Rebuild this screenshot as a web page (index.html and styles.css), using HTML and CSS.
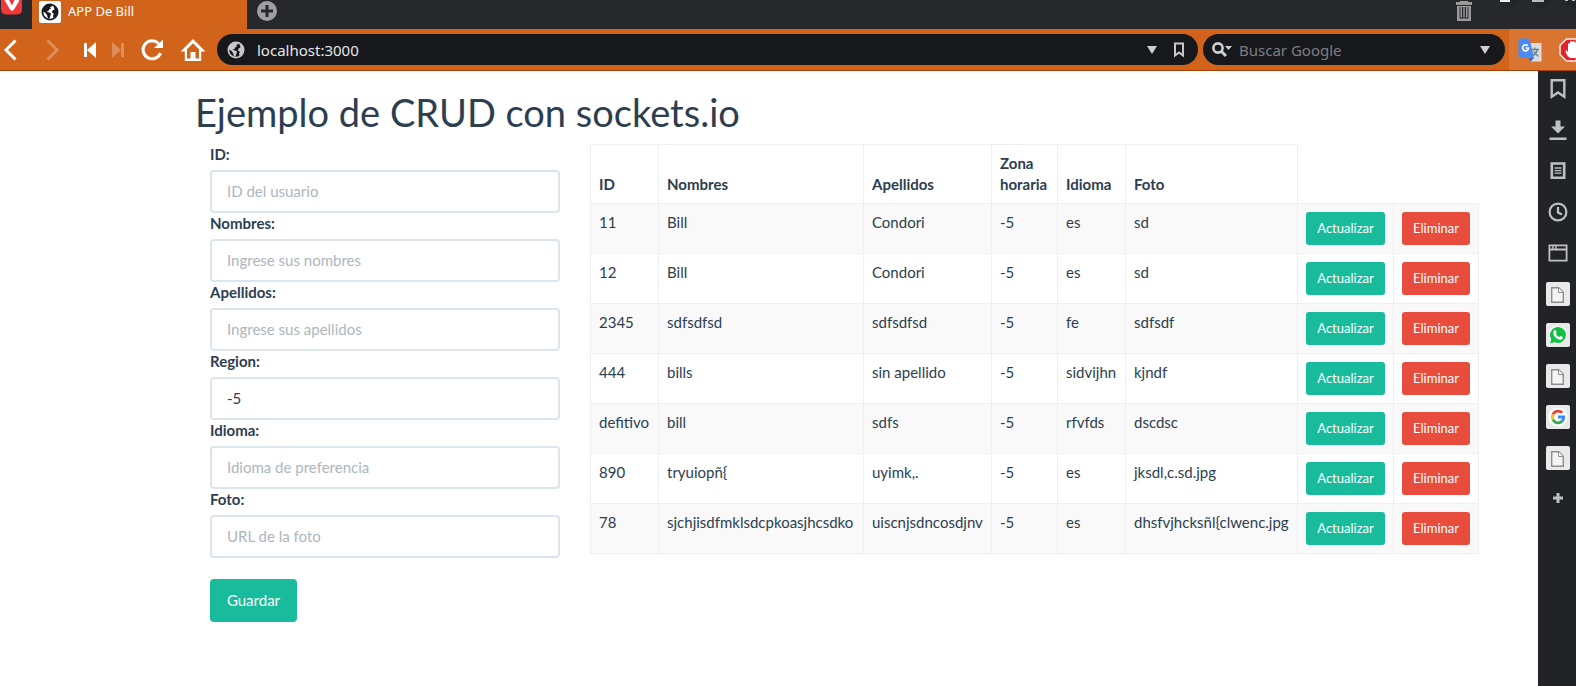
FILE: index.html
```html
<!DOCTYPE html>
<html lang="es">
<head>
<meta charset="utf-8">
<title>APP De Bill</title>
<link rel="stylesheet" href="styles.css">
</head>
<body>
<svg class="defs" width="0" height="0" aria-hidden="true">
  <symbol id="globe" viewBox="0 0 18 18">
    <circle cx="9" cy="9" r="7.6" fill="none" stroke="currentColor" stroke-width="1.8"/>
    <path fill="currentColor" d="M2 7 3.500 3.500 7 1.500 10.500 2 11 3.500 9 4 10 5.500 8 6.500 7.500 8 5.500 8.500 8 9.500 10 10.500 9.500 12.500 8.500 15.500 7 15.500 6 12 4.500 10 2 8.500ZM12.500 3 15.500 5.500 16.500 9 15 13 12.500 15 12 12.500 13 11 11 9.500 11.500 7.500 13.500 6.500Z"/>
  </symbol>
  <symbol id="page" viewBox="0 0 24 24">
    <path fill="#f4f4f4" stroke="#8e8e8e" stroke-width="1.4" d="M5.700 5.700h7l4.600 4.600v10H5.700z"/>
    <path fill="#fff" stroke="#8e8e8e" d="M12.500 6v4.500H17"/>
  </symbol>
</svg>

<header class="browser">
  <div class="tabs">
    <svg class="vivaldi" width="22" height="29" viewBox="0 0 22 29"><path fill="#ef3939" d="M1 0h21v10q0 4-5 4.500H6Q1 14 1 9z"/><path fill="#fff" d="M4.500 0h4.500l3 5.500L14.500 0H19q0 2-1 3l-4 6.500q-2 2.500-4 0z"/></svg>
    <div class="tab">
      <span class="favicon"><svg width="18" height="18"><use href="#globe"/></svg></span>
      <span>APP De Bill</span>
    </div>
    <button class="icon new-tab" aria-label="Nueva pestaña"><svg width="20" height="20" viewBox="0 0 20 20"><circle cx="10" cy="10" r="10" fill="#a0a0a1"/><path stroke="#27282c" stroke-width="3" d="M10 4v12M4 10h12"/></svg></button>
    <button class="icon trash" aria-label="Pestañas cerradas"><svg width="16" height="20" viewBox="0 0 16 20"><path fill="#9b9b9c" d="M0 1h4V0h8v1h4v3H0zM1 5h14v15H1z"/><path fill="#27282c" d="M3.500 6h9v11.500h-9z"/><path stroke="#9b9b9c" stroke-width="1.500" d="M5.200 6v10.500M8 6v10.500M10.800 6v10.500"/></svg></button>
    <svg class="window-controls" width="76" height="10" viewBox="0 0 76 10"><path fill="#242528" d="M-1 0h20q-3 8-10 8T-1 0zM31 0h20q-3 8-10 8T31 0zM64 0h20q-3 8-10 8T64 0z"/><path fill="#eee" d="M0 0h10v2H0z"/><path fill="#bbb" d="M32 0h12v2H32zM65 0h3v1h-3zM72 0h3v1h-3z"/></svg>
  </div>

  <div class="toolbar">
    <nav class="nav" aria-label="Navegador">
      <button class="icon" aria-label="Atrás"><svg width="14" height="22" viewBox="0 0 14 22"><path fill="none" stroke="#fff" stroke-width="3" d="M12.500 1.500 3 11l9.500 9.500"/></svg></button>
      <button class="icon dim" aria-label="Adelante"><svg width="14" height="22" viewBox="0 0 14 22"><path fill="none" stroke="#fff" stroke-width="3" d="M1.500 1.500 11 11l-9.500 9.500"/></svg></button>
      <button class="icon" aria-label="Rebobinar"><svg width="12" height="16" viewBox="0 0 12 16"><path fill="#fff" d="M0 1h3v14H0zM12 0v16L3 8z"/></svg></button>
      <button class="icon dim" aria-label="Avance rápido"><svg width="12" height="16" viewBox="0 0 12 16"><path fill="#fff" d="M9 1h3v14H9zM0 0v16l9-8z"/></svg></button>
      <button class="icon" aria-label="Recargar"><svg width="24" height="24" viewBox="0 0 24 24"><path fill="none" stroke="#fff" stroke-width="3" d="M18.500 5.500A9 9 0 1 0 20.500 15"/><path fill="#fff" d="M23 1.500V10h-9z"/></svg></button>
      <button class="icon" aria-label="Inicio"><svg width="26" height="22" viewBox="0 0 26 22"><path fill="#fff" fill-rule="evenodd" d="M13 0l12.500 12.500h-4.300V22H4.800v-9.500H.5zM13 4.200l-6 6.100v9.200h3.500V13h5v6.500H19v-9.200z"/></svg></button>
    </nav>
    <div class="pill address">
      <svg class="light" width="18" height="18"><use href="#globe"/></svg>
      <input type="text" aria-label="Dirección" value="localhost:3000">
      <button class="icon" aria-label="Historial"><svg width="10" height="8" viewBox="0 0 10 8"><path fill="#d0d0d0" d="M0 0h10L5 8z"/></svg></button>
      <button class="icon" aria-label="Marcador"><svg width="10" height="16" viewBox="0 0 10 16"><path fill="none" stroke="#c8c8c8" stroke-width="2" d="M1 1.500h8v12L5 10.500l-4 3z"/></svg></button>
    </div>
    <div class="pill search">
      <svg width="20" height="16" viewBox="0 0 20 16"><circle cx="6" cy="6" r="4.600" fill="none" stroke="#d0d0d0" stroke-width="2.600"/><path stroke="#d0d0d0" stroke-width="3" d="m9 9 5 5"/><path fill="#d0d0d0" d="M13 4h7l-3.500 4z"/></svg>
      <input type="text" aria-label="Buscar" placeholder="Buscar Google">
      <button class="icon" aria-label="Buscadores"><svg width="10" height="8" viewBox="0 0 10 8"><path fill="#d0d0d0" d="M0 0h10L5 8z"/></svg></button>
    </div>
    <div class="extensions">
      <svg width="24" height="24" viewBox="0 0 24 24"><path fill="#dcdcdc" d="M9 5h14.500v18.500H12z"/><path fill="#3762c8" d="M11 20h5l-4 4z"/><path fill="#4a8af4" d="M1.500.5h10L16 20H1.500Q.5 20 .5 19V1.500q0-1 1-1z"/><path fill="none" stroke="#fff" stroke-width="1.600" d="M9.800 7.800a3 3 0 1 0 .8 2.200H7.500"/><path fill="none" stroke="#67838c" stroke-width="1.300" d="M13.500 11.500H21M17 9.500v2M19.500 11.500q-1 4-5 6.500M15.500 13.500l5 5"/></svg>
      <svg width="17" height="24" viewBox="0 0 17 24"><path fill="#e3242b" stroke="#eee" stroke-width="1.500" d="M7.500 1h10v22h-10L1 16.500v-9z"/><path fill="#fff" d="M7 12l2 2V6q1-2 2 0V4q1.200-2 2.400 0 1-2 2.200 0l1.400 1v15h-6q-3-2-4.500-6z"/></svg>
    </div>
  </div>
</header>

<div class="view">
  <main class="page">
    <div class="container">
      <h1>Ejemplo de CRUD con sockets.io</h1>
      <div class="row">
        <form class="form">
          <label for="id">ID:</label>
          <input class="field" id="id" type="text" placeholder="ID del usuario">
          <label for="nombres">Nombres:</label>
          <input class="field" id="nombres" type="text" placeholder="Ingrese sus nombres">
          <label for="apellidos">Apellidos:</label>
          <input class="field" id="apellidos" type="text" placeholder="Ingrese sus apellidos">
          <label for="region">Region:</label>
          <input class="field" id="region" type="text" value="-5">
          <label for="idioma">Idioma:</label>
          <input class="field" id="idioma" type="text" placeholder="Idioma de preferencia">
          <label for="foto">Foto:</label>
          <input class="field" id="foto" type="text" placeholder="URL de la foto">
          <button class="btn save" type="button">Guardar</button>
        </form>
        <div class="list">
          <table class="users">
            <thead>
              <tr><th class="c-id">ID</th><th class="c-name">Nombres</th><th class="c-last">Apellidos</th><th class="c-zone">Zona horaria</th><th class="c-lang">Idioma</th><th class="c-photo">Foto</th></tr>
            </thead>
            <tbody>
              <tr><td>11</td><td>Bill</td><td>Condori</td><td>-5</td><td>es</td><td>sd</td><td><button class="btn small update">Actualizar</button></td><td><button class="btn small danger">Eliminar</button></td></tr>
              <tr><td>12</td><td>Bill</td><td>Condori</td><td>-5</td><td>es</td><td>sd</td><td><button class="btn small update">Actualizar</button></td><td><button class="btn small danger">Eliminar</button></td></tr>
              <tr><td>2345</td><td>sdfsdfsd</td><td>sdfsdfsd</td><td>-5</td><td>fe</td><td>sdfsdf</td><td><button class="btn small update">Actualizar</button></td><td><button class="btn small danger">Eliminar</button></td></tr>
              <tr><td>444</td><td>bills</td><td>sin apellido</td><td>-5</td><td>sidvijhn</td><td>kjndf</td><td><button class="btn small update">Actualizar</button></td><td><button class="btn small danger">Eliminar</button></td></tr>
              <tr><td>defitivo</td><td>bill</td><td>sdfs</td><td>-5</td><td>rfvfds</td><td>dscdsc</td><td><button class="btn small update">Actualizar</button></td><td><button class="btn small danger">Eliminar</button></td></tr>
              <tr><td>890</td><td>tryuiopñ{</td><td>uyimk,.</td><td>-5</td><td>es</td><td>jksdl,c.sd.jpg</td><td><button class="btn small update">Actualizar</button></td><td><button class="btn small danger">Eliminar</button></td></tr>
              <tr><td>78</td><td>sjchjisdfmklsdcpkoasjhcsdko</td><td>uiscnjsdncosdjnv</td><td>-5</td><td>es</td><td>dhsfvjhcksñl{clwenc.jpg</td><td><button class="btn small update">Actualizar</button></td><td><button class="btn small danger">Eliminar</button></td></tr>
            </tbody>
          </table>
        </div>
      </div>
    </div>
  </main>

  <aside class="panel">
    <button class="icon" aria-label="Marcadores"><svg width="24" height="24" viewBox="0 0 24 24"><path fill="none" stroke="#bfc0c1" stroke-width="2.400" d="M5.700 3.200h12.600v16.500L12 15.500l-6.300 4.200z"/></svg></button>
    <button class="icon" aria-label="Descargas"><svg width="24" height="24" viewBox="0 0 24 24"><path fill="#bfc0c1" d="M9.500 2.500h5v6H19l-7 7-7-7h4.500zM3.500 19.500h17V22h-17z"/></svg></button>
    <button class="icon" aria-label="Notas"><svg width="24" height="24" viewBox="0 0 24 24"><path fill="none" stroke="#bfc0c1" stroke-width="2.600" d="M5.800 4.500h12.400v14.200H5.800z"/><path stroke="#bfc0c1" stroke-width="1.300" d="M8.500 9h7M8.500 11.600h7M8.500 14.200h7"/></svg></button>
    <button class="icon" aria-label="Historial"><svg width="24" height="24" viewBox="0 0 24 24"><circle cx="12" cy="12" r="8.400" fill="none" stroke="#bfc0c1" stroke-width="2.200"/><path fill="none" stroke="#bfc0c1" stroke-width="2.200" d="M12 7v5.500l4 2"/></svg></button>
    <button class="icon" aria-label="Ventanas"><svg width="24" height="24" viewBox="0 0 24 24"><path fill="none" stroke="#bfc0c1" stroke-width="1.800" d="M3.400 4.400h17.200v15.200H3.400zM3 8.500h18"/><path stroke="#bfc0c1" stroke-width="1.500" d="M7 4v4M10 4v4"/></svg></button>
    <button class="icon web" aria-label="Panel web 1"><svg width="24" height="24"><use href="#page"/></svg></button>
    <button class="icon web" aria-label="WhatsApp"><svg width="24" height="24" viewBox="0 0 24 24"><path fill="#fff" d="M3 21.500 4.200 17A9 9 0 1 1 8 20.200z"/><path fill="#12c143" d="M4 20.500 5.200 16.300A8 8 0 1 1 8.500 19.200z"/><path fill="#fff" d="M7.600 8.200q1.200-1.800 2.200-.6l.9 2-.9 1.300q1.300 2.300 3.500 3.200l1.200-1.200 2.300 1.200q.2 2.400-2.600 2.700Q8.500 15.500 7.400 11z"/></svg></button>
    <button class="icon web" aria-label="Panel web 2"><svg width="24" height="24"><use href="#page"/></svg></button>
    <button class="icon web" aria-label="Google"><svg width="24" height="24" viewBox="0 0 24 24"><circle cx="12" cy="12" r="9.500" fill="#fff"/><g fill="none" stroke-width="2.800"><path stroke="#ea4335" d="M6.900 9.300A5.800 5.800 0 0 1 16.200 7.800"/><path stroke="#fbbc05" d="M6.900 14.700a5.800 5.800 0 0 1 0-5.400"/><path stroke="#34a853" d="M6.900 14.700a5.800 5.800 0 0 0 9 1.700"/><path stroke="#4285f4" d="M12 12h5.800a5.800 5.800 0 0 1-1.900 4.400"/></g></svg></button>
    <button class="icon web" aria-label="Panel web 3"><svg width="24" height="24"><use href="#page"/></svg></button>
    <button class="icon" aria-label="Añadir panel"><svg width="24" height="24" viewBox="0 0 24 24"><path stroke="#bfc0c1" stroke-width="3" d="M12 6v10M7 11h10"/></svg></button>
  </aside>
</div>
</body>
</html>
```
FILE: styles.css
```css
* {
  box-sizing: border-box;
}

body {
  margin: 0;
  min-height: 100vh;
  display: flex;
  flex-direction: column;
  overflow: hidden;
  background: #fff;
  color: #2c3e50;
  font-family: Lato, sans-serif;
  font-size: 15px;
  line-height: 21px;
}

button,
input {
  font: inherit;
}

svg {
  display: block;
}

.defs {
  position: absolute;
}

.icon {
  display: block;
  flex: none;
  padding: 0;
  border: 0;
  background: none;
}

.dim {
  opacity: 0.28;
}

/* Browser frame */

.browser {
  font-family: "Noto Sans", sans-serif;
}

.tabs {
  display: flex;
  align-items: flex-start;
  height: 29px;
  background: #27282c;
}

.tab {
  display: flex;
  align-items: center;
  gap: 7px;
  width: 215px;
  height: 29px;
  margin-left: 10px;
  padding: 0 7px 6px;
  background: #d2631a;
  color: #fff;
  font-size: 13px;
}

.favicon {
  padding: 2px;
  border-radius: 2px;
  background: #fff;
  color: #16181b;
}

.new-tab {
  margin: 1px 0 0 10px;
}

.trash {
  margin: 1px 28px 0 auto;
}

.toolbar {
  display: flex;
  align-items: center;
  height: 42px;
  border-bottom: 1px solid #a83c05;
  background: #d2631a;
}

.nav {
  display: flex;
  align-items: center;
  width: 217px;
  padding-left: 3px;
  gap: 16px;
}

.nav .icon:nth-child(1) {
  margin-right: 13px;
}

.nav .icon:nth-child(2) {
  margin-right: 8px;
}

.pill {
  display: flex;
  align-items: center;
  height: 31px;
  border-radius: 16px;
  background: #17181c;
}

.pill input {
  flex: 1;
  min-width: 0;
  padding: 2px 0 0;
  border: 0;
  outline: 0;
  background: none;
  color: #e6e6e6;
  font-size: 15px;
}

.pill input::placeholder {
  color: #7d7e80;
  opacity: 1;
}

.address {
  flex: 1;
  gap: 17px;
  padding: 0 14px 0 10px;
}

.light {
  margin-right: -5px;
  color: #c8c8c8;
}

.search {
  width: 302px;
  margin: 0 4px 0 5px;
  padding: 0 15px 0 9px;
  gap: 7px;
}

.extensions {
  display: flex;
  align-items: center;
  gap: 17px;
  width: 67px;
  height: 41px;
  padding-left: 9px;
  background: #d97531;
}

.view {
  display: flex;
  flex: 1;
}

.panel {
  display: flex;
  flex-direction: column;
  align-items: center;
  gap: 17px;
  width: 38px;
  padding: 6px 0 0 2px;
  background: #222327;
}

.web {
  border-radius: 2px;
  background: #e9e9e9;
}

/* Page */

.page {
  flex: 1;
  min-width: 0;
  padding-right: 8px;
}

.container {
  max-width: 1140px;
  margin: 0 auto;
}

h1 {
  margin: 20px 0 10px;
  font-size: 38px;
  font-weight: 400;
  line-height: 43px;
}

.row {
  display: grid;
  grid-template-columns: 1fr 2fr;
}

.form,
.list {
  min-width: 0;
  padding: 0 15px;
}

.form label {
  display: block;
  margin-bottom: 5px;
  font-weight: 700;
}

.field {
  display: block;
  width: 100%;
  height: 43px;
  padding: 0 15px 2px;
  border: 2px solid #dce4ec;
  border-radius: 4px;
  background: #fff;
  color: #2c3e50;
}

.field::placeholder {
  color: #acb6c0;
  opacity: 1;
}

.btn {
  display: block;
  padding: 11px 16px;
  border: 0;
  border-radius: 4px;
  background: #18bc9c;
  color: #fff;
}

.save {
  min-width: 87px;
  margin-top: 21px;
}

.small {
  padding: 7px 8px;
  border-radius: 3px;
  font-size: 13px;
  line-height: 19px;
}

.update {
  width: 79px;
}

.danger {
  width: 68px;
  background: #e74c3c;
}

.users {
  width: 100%;
  border-collapse: collapse;
}

.users th,
.users td {
  padding: 8px;
  border: 1px solid #ecf0f1;
  text-align: left;
  vertical-align: top;
}

.users th {
  vertical-align: bottom;
}

.users td:nth-child(3) {
  white-space: nowrap;
}

.users .c-id {
  min-width: 68px;
}

.users .c-name {
  min-width: 205px;
}

.users .c-last {
  min-width: 128px;
}

.users .c-zone {
  min-width: 66px;
}

.users .c-lang {
  min-width: 68px;
}

.users .c-photo {
  min-width: 172px;
}

.users tbody tr:nth-child(odd) {
  background: #f9f9f9;
}
```
